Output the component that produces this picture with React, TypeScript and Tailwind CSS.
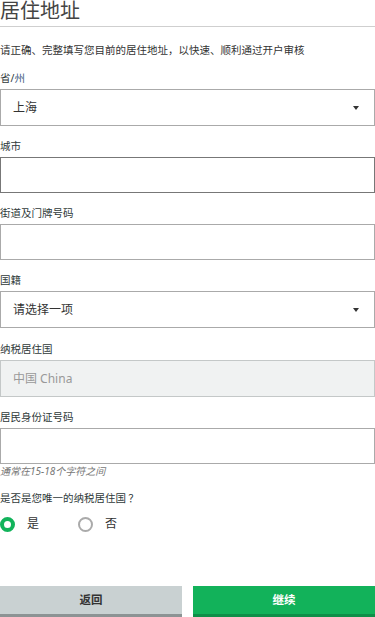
import { useState } from "react";

const font = { fontFamily: '"Noto Sans", "Noto Sans CJK SC", sans-serif' };

const Caret = () => (
  <span className="absolute right-[15px] top-1/2 -translate-y-1/2 border-x-[3.5px] border-t-[4px] border-x-transparent border-t-[#333]" />
);

const Label = ({ children }: { children: React.ReactNode }) => (
  <div className="text-[10.5px] leading-[14px] text-[#2f3a3a] mb-[4px]">{children}</div>
);

const App = () => {
  const [only, setOnly] = useState(true);
  return (
    <div className="w-[375px] h-[617px] bg-white overflow-hidden flex flex-col" style={font}>
      <h1 className="text-[20px] leading-[22px] text-[#444] pb-[4px] border-b border-[#cfcfcf]">居住地址</h1>

      <p className="text-[10.5px] leading-[14px] text-[#333] mt-[16px]" style={{ fontFamily: '"Noto Sans CJK SC", sans-serif' }}>
        请正确、完整填写您目前的居住地址，以快速、顺利通过开户审核
      </p>

      <div className="mt-[14px]">
        <Label>
          省/<span className="text-[#3d5a80]">州</span>
        </Label>
        <div className="relative h-[37px] border border-[#aaa] flex items-center pl-[12px] text-[12px] text-[#333]">
          上海
          <Caret />
        </div>
      </div>

      <div className="mt-[13px]">
        <Label>城市</Label>
        <input className="block w-full h-[36px] border border-[#777] outline-none px-[12px] text-[12px]" />
      </div>

      <div className="mt-[13px]">
        <Label>街道及门牌号码</Label>
        <input className="block w-full h-[36px] border border-[#aaa] outline-none px-[12px] text-[12px]" />
      </div>

      <div className="mt-[13px]">
        <Label>国籍</Label>
        <div className="relative h-[37px] border border-[#aaa] flex items-center pl-[12px] text-[12px] text-[#333]">
          请选择一项
          <Caret />
        </div>
      </div>

      <div className="mt-[14px]">
        <Label>纳税居住国</Label>
        <div className="h-[37px] border border-[#c4c8c8] bg-[#f0f2f2] flex items-center pl-[12px] text-[12px] text-[#999]">
          中国 China
        </div>
      </div>

      <div className="mt-[13px]">
        <Label>居民身份证号码</Label>
        <input className="block w-full h-[36px] border border-[#aaa] outline-none px-[12px] text-[12px]" />
        <div className="text-[10px] leading-[13px] italic text-[#777] mt-[1px]">通常在15-18个字符之间</div>
      </div>

      <div
        className="text-[10.5px] leading-[14px] text-[#2f3a3a] mt-[13px]"
        style={{ fontFamily: '"Noto Sans CJK SC", sans-serif' }}
      >
        是否是您唯一的纳税居住国 ？
      </div>

      <div className="flex items-center mt-[10px] text-[12px] text-[#333]">
        <button onClick={() => setOnly(true)} className="flex items-center gap-[12px] w-[78px]">
          <span
            className={
              only
                ? "w-[15px] h-[15px] rounded-full border-[4px] border-[#12b35b] bg-white"
                : "w-[15px] h-[15px] rounded-full border-[2px] border-[#aaa] bg-white"
            }
          />
          是
        </button>
        <button onClick={() => setOnly(false)} className="flex items-center gap-[12px]">
          <span
            className={
              !only
                ? "w-[15px] h-[15px] rounded-full border-[4px] border-[#12b35b] bg-white"
                : "w-[15px] h-[15px] rounded-full border-[2px] border-[#aaa] bg-white"
            }
          />
          否
        </button>
      </div>

      <div className="mt-auto flex justify-between">
        <button className="w-[182px] h-[31px] bg-[#c9d1d2] border-b-[3px] border-[#8c9394] text-[11.5px] font-bold text-[#333]">
          返回
        </button>
        <button className="w-[182px] h-[31px] bg-[#12b25a] border-b-[3px] border-[#0e8f48] text-[11.5px] font-bold text-white">
          继续
        </button>
      </div>
    </div>
  );
};

export default App;
